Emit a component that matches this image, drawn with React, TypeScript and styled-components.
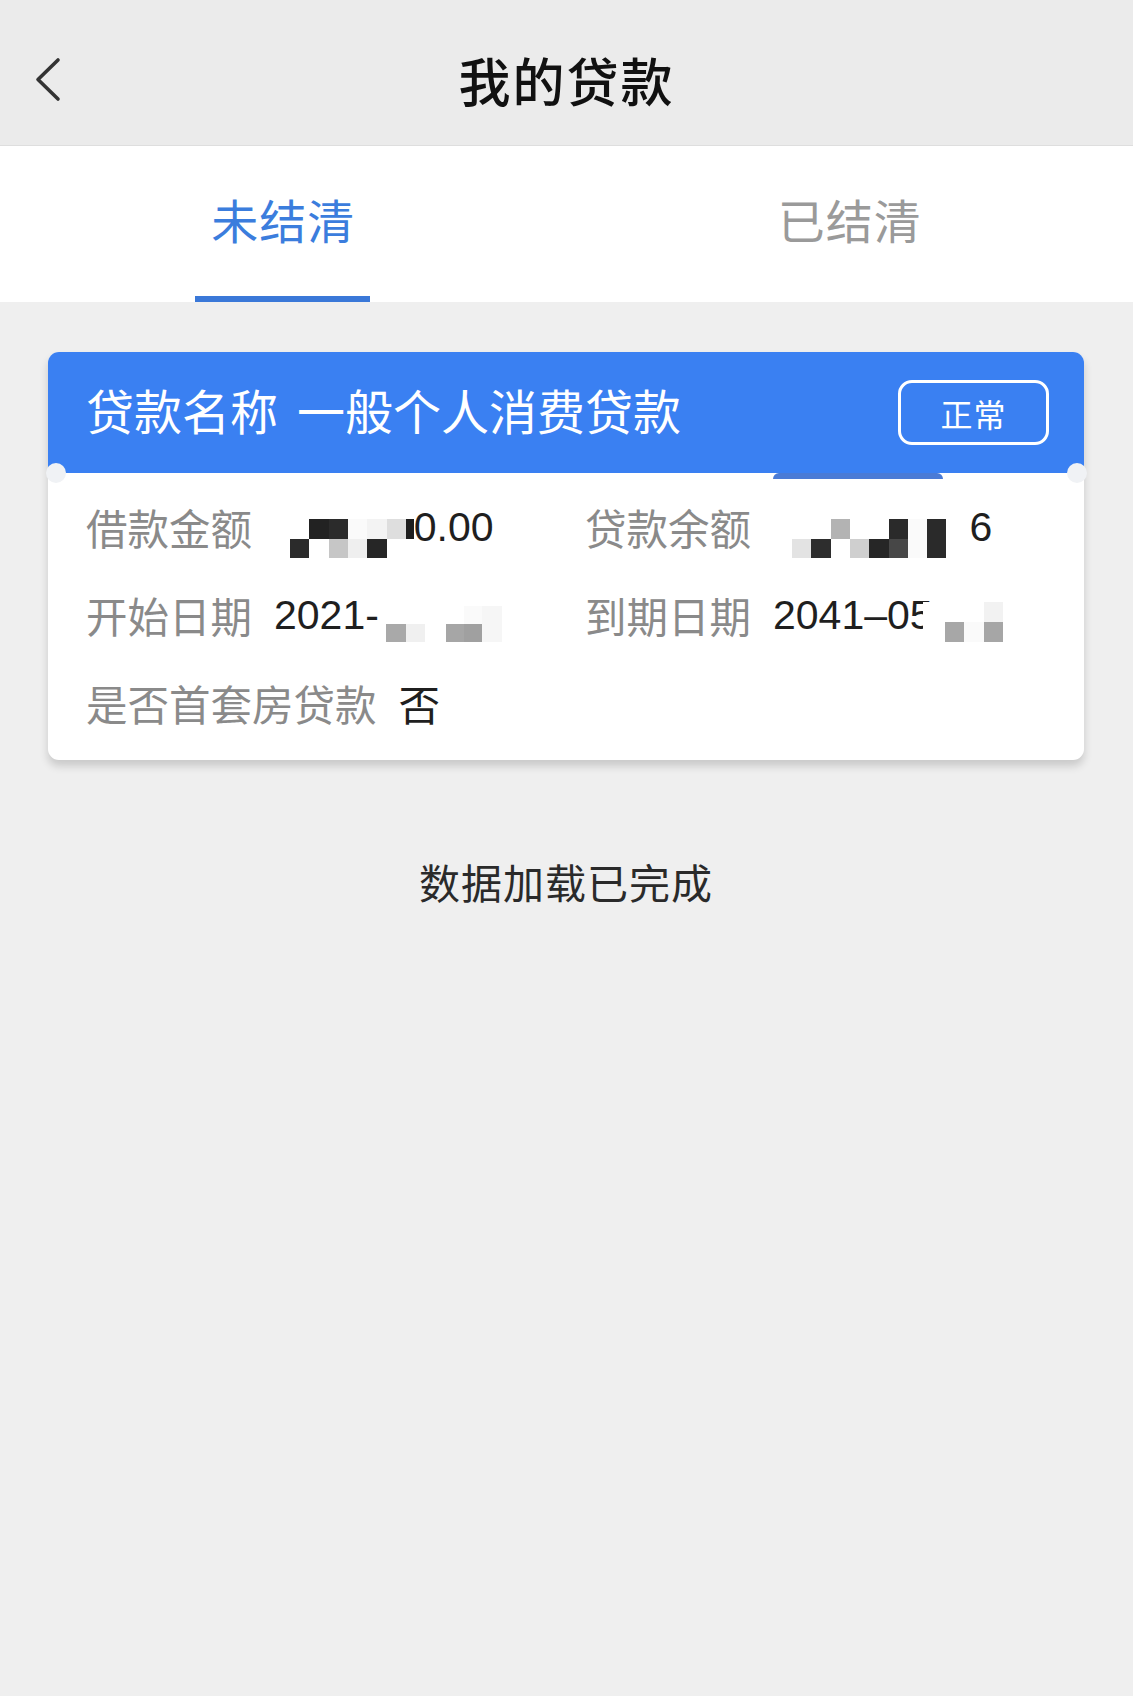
import React, { useState } from 'react';
import styled, { createGlobalStyle } from 'styled-components';

const GlobalStyle = createGlobalStyle`
  html, body {
    margin: 0;
    padding: 0;
    background: #efefef;
  }
  body {
    font-family: "Noto Sans CJK SC", "Noto Sans", sans-serif;
  }
`;

const Page = styled.div`
  width: 1133px;
  min-height: 1696px;
  background: #efefef;
  display: flex;
  flex-direction: column;
`;

const NavBar = styled.div`
  height: 145px;
  background: #ebebeb;
  border-bottom: 1px solid #dedede;
  display: grid;
  grid-template-columns: 120px 1fr 120px;
  align-items: center;
`;

const BackButton = styled.button`
  border: 0;
  background: none;
  padding: 14px 0 0 34px;
  height: 74px;
  display: flex;
  align-items: center;
  cursor: pointer;
`;

const Title = styled.h1`
  margin: 0;
  text-align: center;
  font-size: 52px;
  font-weight: 500;
  letter-spacing: 2px;
  color: #111;
  padding-top: 14px;
`;

const TabBar = styled.div`
  height: 156px;
  background: #fff;
  display: grid;
  grid-template-columns: 1fr 1fr;
`;

const Tab = styled.div<{ $active?: boolean }>`
  position: relative;
  display: flex;
  align-items: center;
  justify-content: center;
  padding-bottom: 12px;
  font-size: 47px;
  letter-spacing: 1px;
  color: ${(p) => (p.$active ? '#3b7ddd' : '#9a9a9a')};
  cursor: pointer;

  &::after {
    content: '';
    display: ${(p) => (p.$active ? 'block' : 'none')};
    position: absolute;
    bottom: 0;
    left: 50%;
    width: 175px;
    height: 6px;
    margin-left: -88px;
    background: #3a78d8;
  }
`;

const Content = styled.div`
  padding: 50px 49px 0 48px;
  display: flex;
  flex-direction: column;
`;

const Card = styled.div`
  position: relative;
  border-radius: 11px;
  background: #fff;
  box-shadow: 0 6px 9px rgba(0, 0, 0, 0.16);
`;

const CardHead = styled.div`
  position: relative;
  height: 121px;
  background: #3a80f2;
  border-radius: 11px 11px 0 0;
  display: flex;
  align-items: center;
  justify-content: space-between;
  padding: 0 35px 0 38px;
  z-index: 1;
`;

const CardTitle = styled.div`
  display: flex;
  gap: 19px;
  font-size: 48px;
  color: #fff;
  white-space: nowrap;
  padding-bottom: 8px;
`;

const Badge = styled.div`
  width: 145px;
  height: 59px;
  border: 3px solid #fff;
  border-radius: 14px;
  display: flex;
  align-items: center;
  justify-content: center;
  color: #fff;
  font-size: 32px;
  letter-spacing: 1px;
`;

const Notch = styled.span<{ $side: 'left' | 'right' }>`
  position: absolute;
  bottom: -10px;
  ${(p) => (p.$side === 'left' ? 'left: -2px;' : 'right: -3px;')}
  width: 20px;
  height: 20px;
  border-radius: 50%;
  background: #f0f2f5;
  z-index: 2;
`;

const PeekBar = styled.span`
  position: absolute;
  top: 121px;
  left: 725px;
  width: 170px;
  height: 6px;
  border-radius: 8px 8px 0 0;
  background: #4a7bd6;
`;

const CardBody = styled.div`
  padding: 10px 0 13px 38px;
  display: grid;
  grid-template-columns: 499px 1fr;
  grid-auto-rows: 88px;
`;

const Field = styled.div<{ $span?: boolean }>`
  display: flex;
  align-items: center;
  gap: 22px;
  ${(p) => (p.$span ? 'grid-column: 1 / -1;' : '')}
`;

const Label = styled.span`
  font-size: 41.5px;
  color: #8a8a8a;
  white-space: nowrap;
`;

const Value = styled.span`
  font-family: "Liberation Sans", "Noto Sans CJK SC", sans-serif;
  font-size: 41px;
  color: #1f1f1f;
  white-space: nowrap;
`;

const CjkValue = styled.span`
  font-size: 41.5px;
  color: #1f1f1f;
`;

const ValueRow = styled.span`
  display: flex;
  align-items: center;
`;

const MosaicGrid = styled.span<{ $cols: string; $rowH: number; $shift: number; $ml: number; $mr: number }>`
  display: inline-grid;
  grid-template-columns: ${(p) => p.$cols};
  grid-auto-rows: ${(p) => p.$rowH}px;
  margin-top: ${(p) => p.$shift}px;
  margin-left: ${(p) => p.$ml}px;
  margin-right: ${(p) => p.$mr}px;
`;

const Cell = styled.span<{ $c: string }>`
  background: ${(p) => p.$c};
`;

type MosaicProps = {
  widths: number[];
  rows: string[][];
  rowH?: number;
  shift?: number;
  ml?: number;
  mr?: number;
};

// pixelated (blurred-out) parts of the numbers
function Mosaic({ widths, rows, rowH = 19.5, shift = 23, ml = 0, mr = 0 }: MosaicProps) {
  return (
    <MosaicGrid
      $cols={widths.map((w) => `${w}px`).join(' ')}
      $rowH={rowH}
      $shift={shift}
      $ml={ml}
      $mr={mr}
    >
      {rows.map((r, i) => r.map((c, j) => <Cell key={`${i}-${j}`} $c={c} />))}
    </MosaicGrid>
  );
}

const Footer = styled.div`
  margin-top: 91px;
  text-align: center;
  font-size: 41px;
  letter-spacing: 1px;
  color: #2a2a2a;
`;

function BackIcon() {
  return (
    <svg width="30" height="46" viewBox="0 0 30 46" fill="none">
      <path d="M24 3 L4 22.5 L24 42" stroke="#333" strokeWidth="3.6" strokeLinecap="round" strokeLinejoin="round" />
    </svg>
  );
}

const W = 19.3;

export default function App() {
  const [tab, setTab] = useState(0);

  return (
    <Page>
      <GlobalStyle />
      <NavBar>
        <BackButton aria-label="返回">
          <BackIcon />
        </BackButton>
        <Title>我的贷款</Title>
        <div />
      </NavBar>

      <TabBar>
        <Tab $active={tab === 0} onClick={() => setTab(0)}>未结清</Tab>
        <Tab $active={tab === 1} onClick={() => setTab(1)}>已结清</Tab>
      </TabBar>

      <Content>
        <Card>
          <CardHead>
            <CardTitle>
              <span>贷款名称</span>
              <span>一般个人消费贷款</span>
            </CardTitle>
            <Badge>正常</Badge>
            <Notch $side="left" />
            <Notch $side="right" />
          </CardHead>
          <PeekBar />
          <CardBody>
            <Field>
              <Label>借款金额</Label>
              <ValueRow>
                <Mosaic
                  ml={16}
                  widths={[W, W, W, W, W, W, 8]}
                  rows={[
                    ['#ffffff', '#222222', '#2b2b2b', '#fafafa', '#f3f3f3', '#dedede', '#1e1e1e'],
                    ['#2b2b2b', '#ffffff', '#c6c6c6', '#efefef', '#262626', '#ffffff', '#ffffff'],
                  ]}
                />
                <Value>0.00</Value>
              </ValueRow>
            </Field>
            <Field>
              <Label>贷款余额</Label>
              <ValueRow>
                <Mosaic
                  ml={19}
                  mr={23}
                  widths={[W, W, W, W, W, W, W, W]}
                  rows={[
                    ['#ffffff', '#ffffff', '#b3b3b3', '#ffffff', '#ffffff', '#2a2a2a', '#fafafa', '#2a2a2a'],
                    ['#e3e3e3', '#2d2d2d', '#ffffff', '#cfcfcf', '#262626', '#474747', '#fafafa', '#2a2a2a'],
                  ]}
                />
                <Value>6</Value>
              </ValueRow>
            </Field>

            <Field>
              <Label>开始日期</Label>
              <ValueRow>
                <Value>2021-</Value>
                <Mosaic
                  ml={7}
                  rowH={18}
                  shift={18}
                  widths={[20, 19, 21, 18, 18, 20]}
                  rows={[
                    ['#ffffff', '#ffffff', '#ffffff', '#ffffff', '#fafafa', '#f6f6f6'],
                    ['#a9a9a9', '#f0f0f0', '#ffffff', '#a6a6a6', '#a0a0a0', '#f6f6f6'],
                  ]}
                />
              </ValueRow>
            </Field>
            <Field>
              <Label>到期日期</Label>
              <ValueRow>
                <Value>2041–05</Value>
                <Mosaic
                  ml={-10}
                  rowH={20}
                  shift={14}
                  widths={[22, 19, 20, 19]}
                  rows={[
                    ['#ffffff', '#ffffff', '#ffffff', '#f2f2f2'],
                    ['#ffffff', '#a7a7a7', '#fafafa', '#a6a6a6'],
                  ]}
                />
              </ValueRow>
            </Field>

            <Field $span>
              <Label>是否首套房贷款</Label>
              <CjkValue>否</CjkValue>
            </Field>
          </CardBody>
        </Card>

        <Footer>数据加载已完成</Footer>
      </Content>
    </Page>
  );
}
